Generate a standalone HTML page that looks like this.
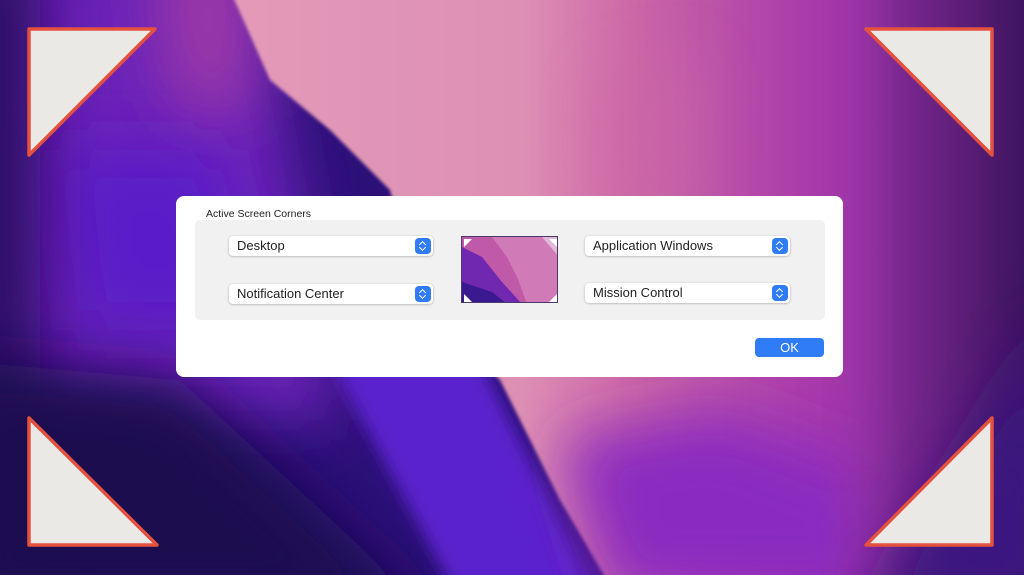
<!DOCTYPE html>
<html><head><meta charset="utf-8"><style>
*{margin:0;padding:0;box-sizing:border-box}
html,body{width:1024px;height:575px;overflow:hidden}
body{position:relative;font-family:"Liberation Sans",sans-serif;background:#2c1078}
svg.bg{position:absolute;left:0;top:0;display:block}
.dlg{position:absolute;left:176px;top:196px;width:667px;height:181px;background:#fff;border-radius:8px}
.title{position:absolute;left:30px;top:12px;font-size:10.5px;color:#222}
.panel{position:absolute;left:19px;top:24px;width:630px;height:100px;background:#f1f1f1;border-radius:5px}
.pop{position:absolute;height:20px;background:#fff;border-radius:4px;box-shadow:0 0.5px 2px rgba(0,0,0,.3);font-size:13px;color:#222;line-height:20px;padding-left:8px}
.pop i{position:absolute;right:2px;top:2px;width:16px;height:16px;background:#2f7cf6;border-radius:4px}
.pop i:before,.pop i:after{content:"";position:absolute;left:5px;width:4px;height:4px;border-left:1.3px solid #fff;border-top:1.3px solid #fff}
.pop i:before{top:4px;transform:rotate(45deg)}
.pop i:after{top:7px;transform:rotate(-135deg)}
.prev{position:absolute;left:285px;top:40px;width:97px;height:67px;border:1px solid #4a3a6a;overflow:hidden}
.ok{position:absolute;left:579px;top:142px;width:69px;height:19px;background:#2f7cf6;border-radius:4px;color:#fff;font-size:13px;text-align:center;line-height:19px}
</style></head><body>
<svg class="bg" width="1024" height="575" viewBox="0 0 1024 575">
<defs>
<filter id="b" filterUnits="userSpaceOnUse" x="-200" y="-200" width="1424" height="975"><feGaussianBlur stdDeviation="30"/></filter>
<filter id="m" filterUnits="userSpaceOnUse" x="-200" y="-200" width="1424" height="975"><feGaussianBlur stdDeviation="8"/></filter>
<filter id="s" filterUnits="userSpaceOnUse" x="-200" y="-200" width="1424" height="975"><feGaussianBlur stdDeviation="1.5"/></filter>
<linearGradient id="pk" x1="0" y1="0" x2="1" y2="0"><stop offset="0" stop-color="#e49ab8"/><stop offset=".4" stop-color="#de90b4"/><stop offset=".55" stop-color="#cc68a6"/><stop offset=".8" stop-color="#a83aaa"/><stop offset="1" stop-color="#9a34aa"/></linearGradient>
<linearGradient id="rt" x1="0" y1="0" x2="1" y2="0"><stop offset="0" stop-color="#9a34aa" stop-opacity="0"/><stop offset=".4" stop-color="#7a2890"/><stop offset="1" stop-color="#3e145e"/></linearGradient>
</defs>
<rect width="1024" height="575" fill="#2c1078"/>
<path d="M-50 -50H250L300 200L340 420L-50 420Z" fill="#6a22b8" filter="url(#b)"/>
<path d="M60 150L220 150L260 330L80 330Z" fill="#5a1ec8" filter="url(#b)"/>
<path d="M150 -50H260L250 120L170 100Z" fill="#9a38a8" filter="url(#b)"/>
<path d="M-50 -50H40V620H-50Z" fill="#2a0c62" filter="url(#b)"/>
<path d="M-50 360L180 380L440 620H-50Z" fill="#1c0850" filter="url(#b)"/>
<path d="M330 360L480 360L610 620H470Z" fill="#5a22cc" filter="url(#m)"/>
<path d="M230 -10L270 80L330 130L390 190L420 300L500 380L560 500L610 585H920L960 -10Z" fill="url(#pk)" filter="url(#s)"/>
<path d="M600 80L700 60L690 300L620 300Z" fill="#cc68a6" opacity=".5" filter="url(#b)"/>
<path d="M560 440L720 410L880 470L880 600H610Z" fill="#8a2cc0" filter="url(#b)"/>
<rect x="820" y="0" width="204" height="575" fill="url(#rt)"/>
<path d="M1060 300V620H860Z" fill="#3a1480" filter="url(#b)"/>
</svg>
<svg width="1024" height="575" style="position:absolute;left:0;top:0;display:block">
<g fill="#ebe9e6" stroke="#e5513f" stroke-width="3.5" stroke-linejoin="round">
<path d="M29 29H155L29 155Z"/>
<path d="M866 29H992V155Z"/>
<path d="M29 418V545H157Z"/>
<path d="M992 418V545H866Z"/>
</g></svg>
<div class="dlg">
<div class="title">Active Screen Corners</div>
<div class="panel"></div>
<div class="pop" style="left:53px;top:40px;width:204px">Desktop<i></i></div>
<div class="pop" style="left:53px;top:88px;width:204px">Notification Center<i></i></div>
<div class="pop" style="left:409px;top:40px;width:205px">Application Windows<i></i></div>
<div class="pop" style="left:409px;top:87px;width:205px">Mission Control<i></i></div>
<div class="prev"><svg width="97" height="67">
<rect width="97" height="67" fill="#c05aa8"/>
<path d="M0 0H97V30L70 10L50 0Z" fill="#e0b8d8"/>
<path d="M30 0L45 20L55 40L65 67H97V20L80 0Z" fill="#d07ab8"/>
<path d="M0 10L20 20L40 45L60 67H0Z" fill="#7028b0"/>
<path d="M0 45L30 55L45 67H0Z" fill="#3a1890"/>
<g fill="#fff"><path d="M2 2H10L2 10Z"/><path d="M95 2H87L95 10Z"/><path d="M2 65H10L2 57Z"/><path d="M95 65H87L95 57Z"/></g>
</svg></div>
<div class="ok">OK</div>
</div>
</body></html>
